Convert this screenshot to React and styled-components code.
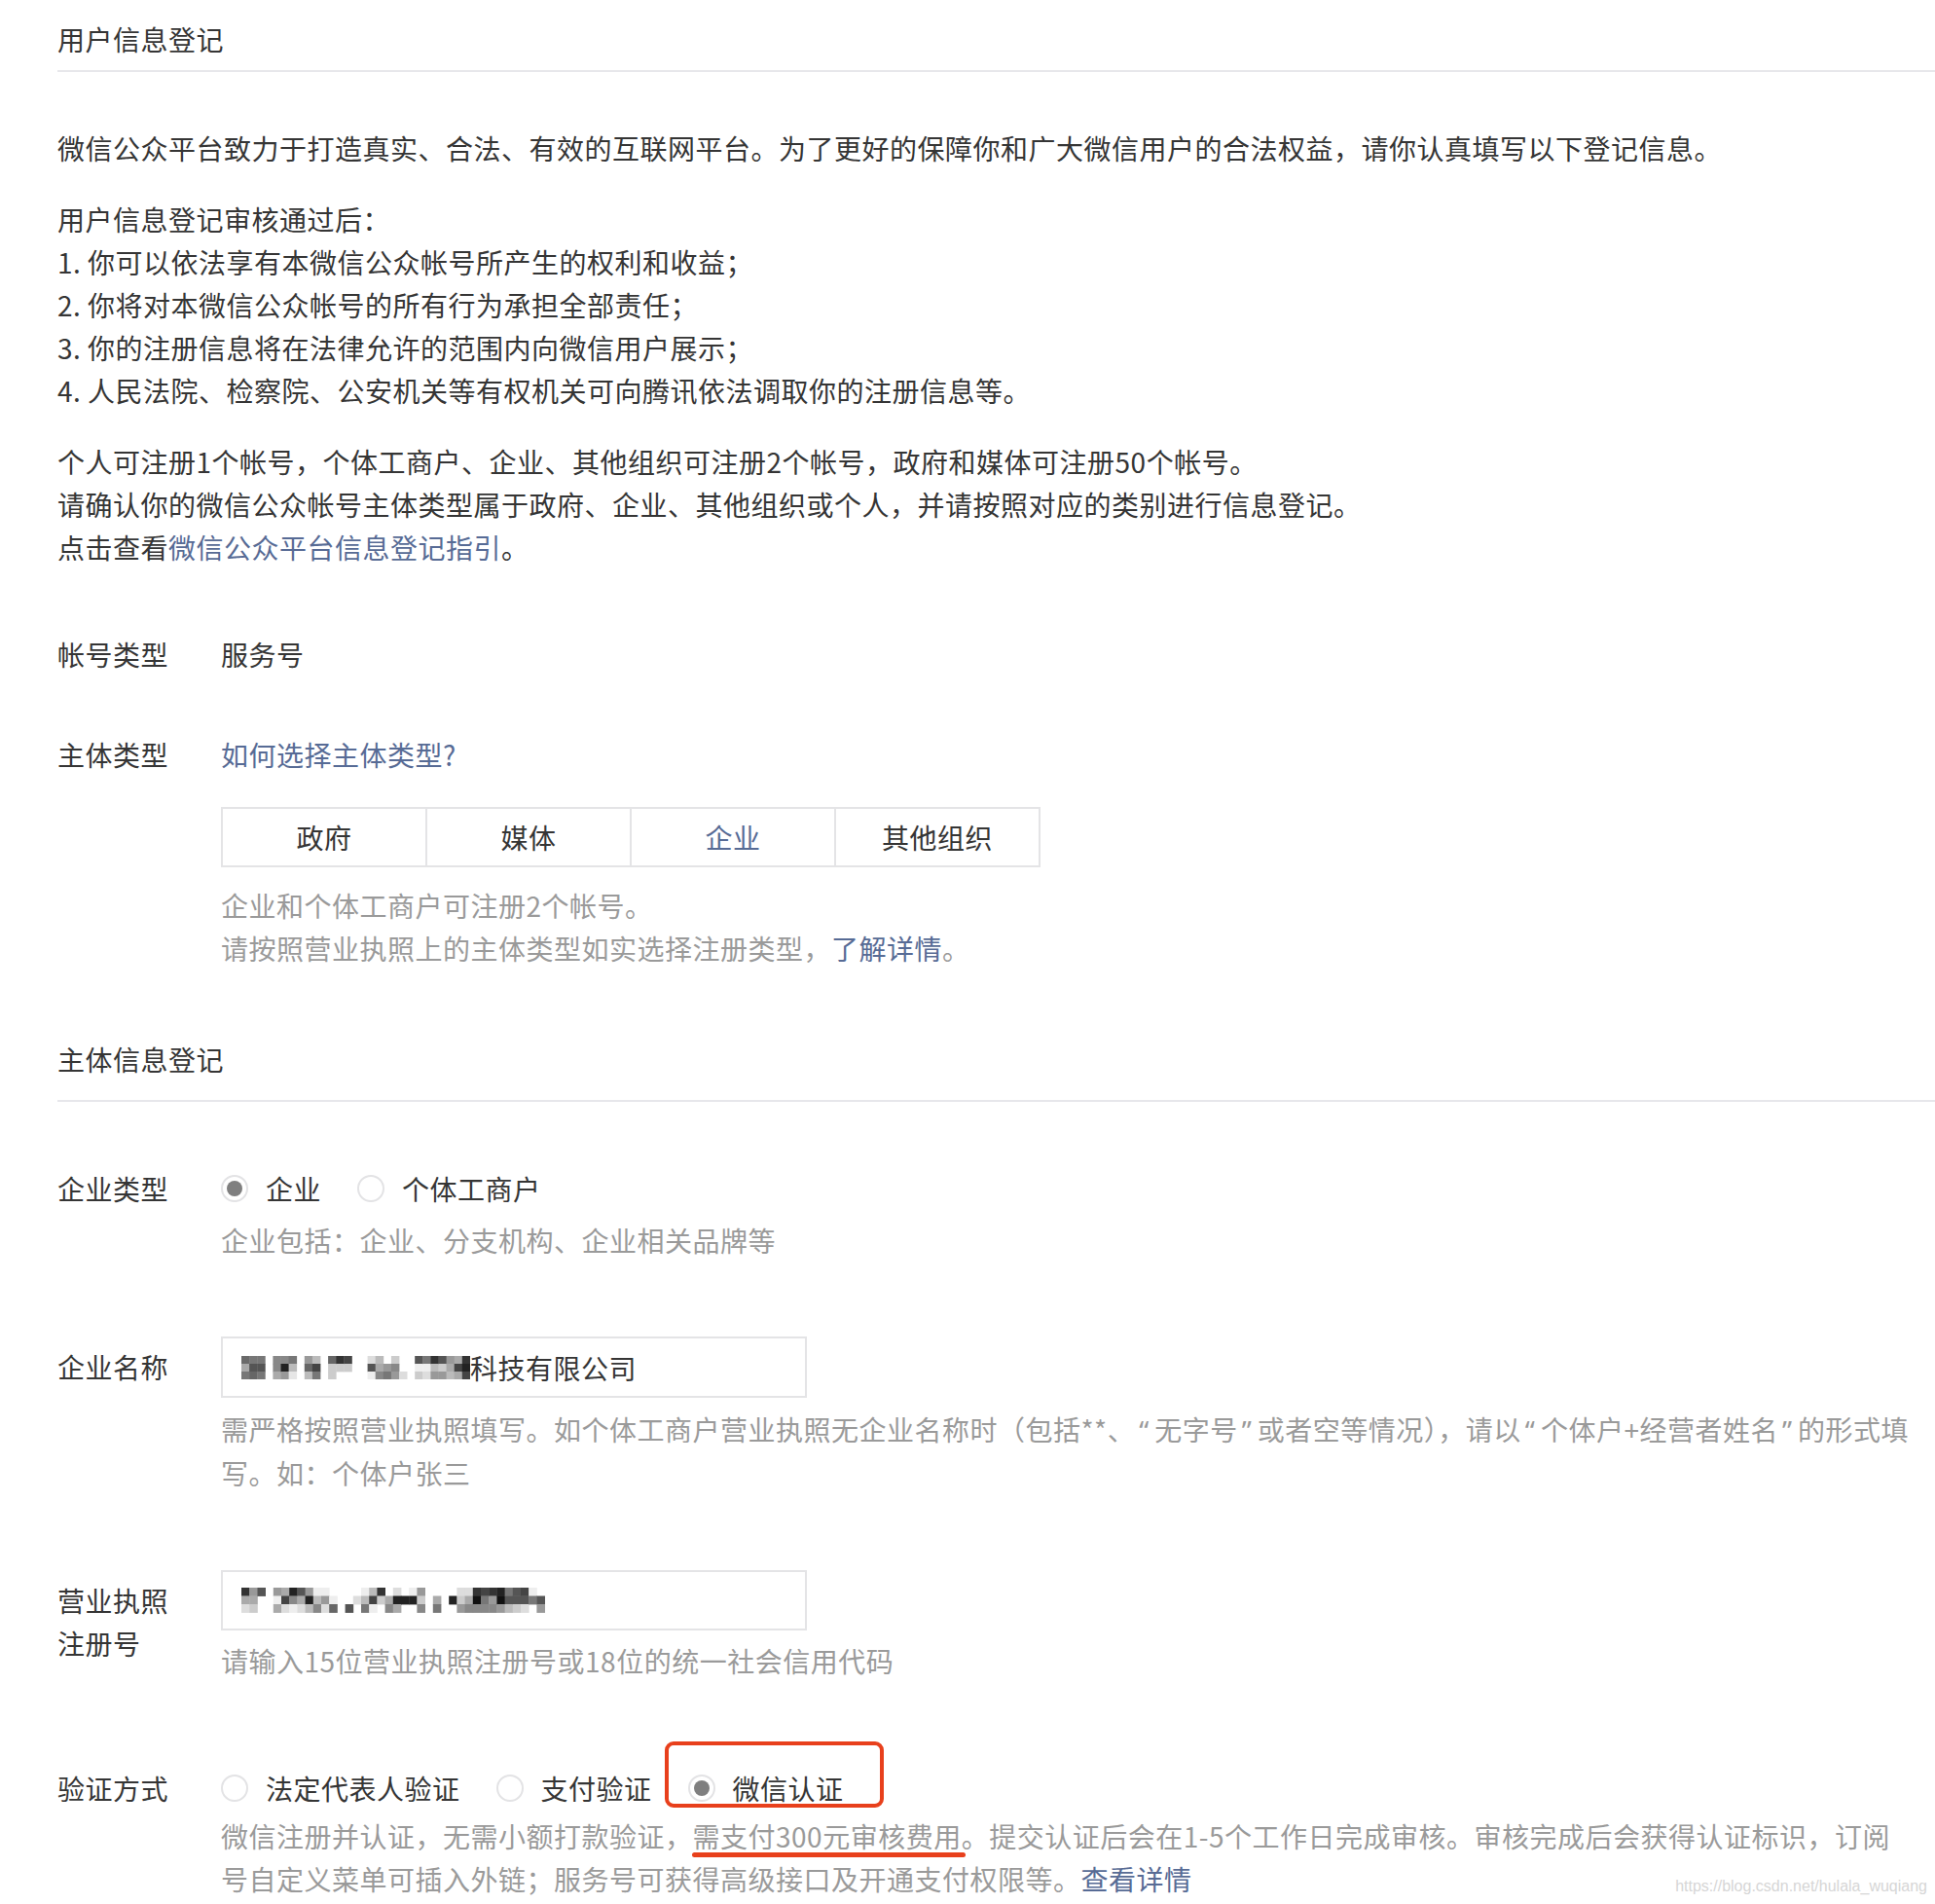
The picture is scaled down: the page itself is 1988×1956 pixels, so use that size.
import React from "react";
import styled, { createGlobalStyle } from "styled-components";

const GlobalStyle = createGlobalStyle`
  html, body {
    margin: 0;
    padding: 0;
    background: #fff;
  }
  body {
    font-family: "Noto Sans CJK SC", "Noto Sans", sans-serif;
    color: #353535;
  }
`;

const Page = styled.div`
  position: relative;
  min-height: 1956px;
  padding: 18px 0 0 59px;
  box-sizing: border-box;
  font-size: 28px;
  line-height: 44px;
  letter-spacing: 0.5px;
  overflow: hidden;
`;

const SectionTitle = styled.h2`
  margin: ${(p) => p.$top || 0}px 0 0;
  padding-bottom: ${(p) => p.$gap}px;
  border-bottom: 2px solid #e7e7eb;
  font-size: 28px;
  font-weight: 400;
  line-height: 44px;
`;

const Para = styled.p`
  margin: ${(p) => p.$top}px 0 0;
`;

const Link = styled.a`
  color: #576b95;
  text-decoration: none;
`;

const Quote = styled.span`
  font-family: "Noto Sans", sans-serif;
  letter-spacing: 2px;
  margin: 0 4px;
`;

const Row = styled.div`
  display: flex;
  margin-top: ${(p) => p.$top}px;
`;

const Label = styled.div`
  width: 168px;
  flex-shrink: 0;
  padding-top: ${(p) => p.$pt || 0}px;
`;

const Value = styled.div`
  flex: 1;
  min-width: 0;
`;

const Hint = styled.div`
  color: #9a9a9a;
  margin-top: ${(p) => p.$top || 0}px;
  white-space: nowrap;
`;

const Segments = styled.div`
  display: flex;
  width: 842px;
  height: 62px;
  margin-top: 32px;
  box-sizing: border-box;
  border: 2px solid #e4e4e6;
`;

const Segment = styled.div`
  flex: 1;
  display: flex;
  align-items: center;
  justify-content: center;
  color: ${(p) => (p.$active ? "#576b95" : "#353535")};

  & + & {
    border-left: 2px solid #e4e4e6;
  }
`;

const RadioGroup = styled.div`
  display: flex;
  align-items: center;
  height: 44px;
`;

const Option = styled.label`
  position: relative;
  display: flex;
  align-items: center;
  margin-right: 37px;

  &::after {
    content: "";
    display: ${(p) => (p.$marked ? "block" : "none")};
    position: absolute;
    left: -24px;
    right: -41px;
    top: -26px;
    bottom: 2px;
    border: 4px solid #e8401c;
    border-radius: 9px;
  }
`;

const RadioDot = styled.span`
  width: 28px;
  height: 28px;
  box-sizing: border-box;
  border-radius: 50%;
  border: 2px solid #e3e3e5;
  margin-right: 18px;
  display: flex;
  align-items: center;
  justify-content: center;
  flex-shrink: 0;

  &::after {
    content: "";
    width: 16px;
    height: 16px;
    border-radius: 50%;
    background: ${(p) => (p.$checked ? "#7f7f7f" : "transparent")};
  }
`;

const Field = styled.div`
  width: 602px;
  height: ${(p) => p.$h}px;
  box-sizing: border-box;
  border: 2px solid #e4e4e6;
  display: flex;
  align-items: center;
  padding-left: 19px;
`;

const MosaicSvg = styled.svg`
  display: block;
  flex-shrink: 0;
`;

const Marked = styled.span`
  position: relative;

  &::after {
    content: "";
    position: absolute;
    left: -1px;
    right: -4px;
    bottom: -2px;
    height: 5px;
    border-radius: 3px;
    background: #e8401c;
  }
`;

const Watermark = styled.div`
  position: absolute;
  right: 8px;
  bottom: 6px;
  font-family: "Liberation Sans Narrow", "Liberation Sans", sans-serif;
  font-size: 16px;
  line-height: 24px;
  letter-spacing: 0;
  color: #d6d6d6;
`;

// pixelated (blurred) parts of the entered values: one string per column, gray levels top→bottom
const nameCells = [
  "6a a9 77", "77 55 66", "77 55 77", "ff ff ff", "88 88 aa", "88 22 99", "77 bb e6",
  "ff ff ff", "99 66 bb", "bb 44 77", "ff ff ff", "66 cc cc", "33 cc ff", "44 cc ff",
  "ff ff ff", "ff ff ff", "dd 55 ee", "bb aa 88", "ff 99 77", "cc 88 99", "ff ff dd",
  "ff ff ff", "55 ee cc", "77 ee dd", "33 bb 99", "55 cc 99", "99 aa bb", "aa 44 aa",
  "33 22 44",
];

const licenseCells = [
  "33 aa dd", "99 aa cc", "55 ff ff", "ff ff ff", "99 ee aa", "aa 44 dd", "22 88 ee",
  "55 aa dd", "99 22 bb", "ee bb 88", "ee 99 dd", "ff ee 66", "ff ff ff", "ff ff 55",
  "ff dd ff", "ee bb 77", "bb 44 ee", "33 cc ff", "ff aa 88", "dd 22 aa", "ff 22 ff",
  "ee 22 ff", "99 cc 88", "ff ff ff", "ff aa 77", "ff ff ff", "ff 22 ff", "dd cc 99",
  "dd aa 88", "33 11 88", "44 77 88", "33 99 88", "22 11 99", "77 55 bb", "55 55 cc",
  "44 55 dd", "ee 77 ff", "ff 55 99",
];

function Mosaic({ cells, w, h }) {
  return (
    <MosaicSvg width={cells.length * w} height={h * 3}>
      {cells.map((col, i) =>
        col.split(" ").map((v, j) =>
          v === "ff" ? null : (
            <rect
              key={`${i}-${j}`}
              x={i * w}
              y={j * h}
              width={w + 0.4}
              height={h + 0.4}
              fill={`#${v}${v}${v}`}
            />
          )
        )
      )}
    </MosaicSvg>
  );
}

function Radio({ checked, marked, children }) {
  return (
    <Option $marked={marked}>
      <RadioDot $checked={checked} />
      {children}
    </Option>
  );
}

export default function App() {
  return (
    <>
      <GlobalStyle />
      <Page>
        <SectionTitle $gap={10}>用户信息登记</SectionTitle>

        <Para $top={56}>
          微信公众平台致力于打造真实、合法、有效的互联网平台。为了更好的保障你和广大微信用户的合法权益，请你认真填写以下登记信息。
        </Para>
        <Para $top={29}>
          用户信息登记审核通过后：
          <br />
          1. 你可以依法享有本微信公众帐号所产生的权利和收益；
          <br />
          2. 你将对本微信公众帐号的所有行为承担全部责任；
          <br />
          3. 你的注册信息将在法律允许的范围内向微信用户展示；
          <br />
          4. 人民法院、检察院、公安机关等有权机关可向腾讯依法调取你的注册信息等。
        </Para>
        <Para $top={29}>
          个人可注册1个帐号，个体工商户、企业、其他组织可注册2个帐号，政府和媒体可注册50个帐号。
          <br />
          请确认你的微信公众帐号主体类型属于政府、企业、其他组织或个人，并请按照对应的类别进行信息登记。
          <br />
          点击查看<Link href="#">微信公众平台信息登记指引</Link>。
        </Para>

        <Row $top={66}>
          <Label>帐号类型</Label>
          <Value>服务号</Value>
        </Row>

        <Row $top={59}>
          <Label>主体类型</Label>
          <Value>
            <Link href="#">如何选择主体类型?</Link>
            <Segments>
              <Segment>政府</Segment>
              <Segment>媒体</Segment>
              <Segment $active>企业</Segment>
              <Segment>其他组织</Segment>
            </Segments>
            <Hint $top={17}>
              企业和个体工商户可注册2个帐号。
              <br />
              请按照营业执照上的主体类型如实选择注册类型，<Link href="#">了解详情</Link>。
            </Hint>
          </Value>
        </Row>

        <SectionTitle $top={70} $gap={20}>
          主体信息登记
        </SectionTitle>

        <Row $top={67}>
          <Label>企业类型</Label>
          <Value>
            <RadioGroup>
              <Radio checked>企业</Radio>
              <Radio>个体工商户</Radio>
            </RadioGroup>
            <Hint $top={9}>企业包括：企业、分支机构、企业相关品牌等</Hint>
          </Value>
        </Row>

        <Row $top={77}>
          <Label $pt={9}>企业名称</Label>
          <Value>
            <Field $h={63}>
              <Mosaic cells={nameCells} w={8.1} h={8} />
              科技有限公司
            </Field>
            <Hint $top={10}>
              需严格按照营业执照填写。如个体工商户营业执照无企业名称时（包括**、<Quote>“</Quote>无字号<Quote>”</Quote>或者空等情况），请以<Quote>“</Quote>个体户+经营者姓名<Quote>”</Quote>的形式填
              <br />
              写。如：个体户张三
            </Hint>
          </Value>
        </Row>

        <Row $top={78}>
          <Label $pt={9}>
            营业执照
            <br />
            注册号
          </Label>
          <Value>
            <Field $h={62}>
              <Mosaic cells={licenseCells} w={8.2} h={8.5} />
            </Field>
            <Hint $top={9}>请输入15位营业执照注册号或18位的统一社会信用代码</Hint>
          </Value>
        </Row>

        <Row $top={87}>
          <Label>验证方式</Label>
          <Value>
            <RadioGroup>
              <Radio>法定代表人验证</Radio>
              <Radio>支付验证</Radio>
              <Radio checked marked>
                微信认证
              </Radio>
            </RadioGroup>
            <Hint $top={5}>
              微信注册并认证，无需小额打款验证，<Marked>需支付300元审核费用</Marked>。提交认证后会在1-5个工作日完成审核。审核完成后会获得认证标识，订阅
              <br />
              号自定义菜单可插入外链；服务号可获得高级接口及开通支付权限等。<Link href="#">查看详情</Link>
            </Hint>
          </Value>
        </Row>

        <Watermark>https://blog.csdn.net/hulala_wuqiang</Watermark>
      </Page>
    </>
  );
}
